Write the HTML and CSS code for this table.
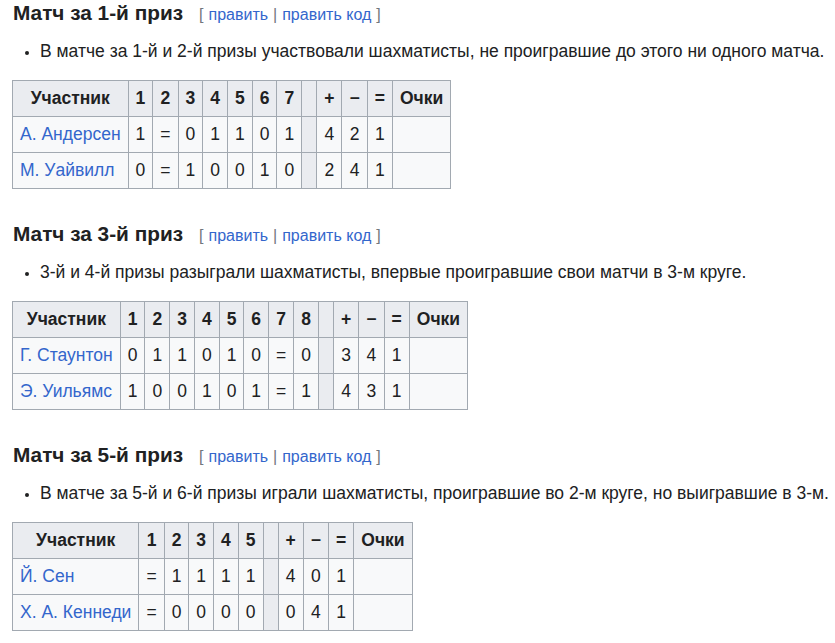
FILE: index.html
```html
<!DOCTYPE html>
<html lang="ru">
<head>
<meta charset="utf-8">
<link rel="stylesheet" href="styles.css">
</head>
<body>
<div class="content">
  <section class="sec">
    <h3 class="heading"><span class="title">Матч за 1-й приз</span><span class="edit"><span class="br">[</span><a href="#">править</a><span class="sep">|</span><a href="#">править код</a><span class="br">]</span></span></h3>
    <ul class="list"><li>В матче за 1-й и 2-й призы участвовали шахматисты, не проигравшие до этого ни одного матча.</li></ul>
    <table class="wikitable">
      <tr><th>Участник</th><th>1</th><th>2</th><th>3</th><th>4</th><th>5</th><th>6</th><th>7</th><th class="gap"></th><th>+</th><th>−</th><th>=</th><th>Очки</th></tr>
      <tr><td class="name"><a href="#">А. Андерсен</a></td><td>1</td><td>=</td><td>0</td><td>1</td><td>1</td><td>0</td><td>1</td><td class="gap"></td><td>4</td><td>2</td><td>1</td><td></td></tr>
      <tr><td class="name"><a href="#">М. Уайвилл</a></td><td>0</td><td>=</td><td>1</td><td>0</td><td>0</td><td>1</td><td>0</td><td class="gap"></td><td>2</td><td>4</td><td>1</td><td></td></tr>
    </table>
  </section>
  <section class="sec">
    <h3 class="heading"><span class="title">Матч за 3-й приз</span><span class="edit"><span class="br">[</span><a href="#">править</a><span class="sep">|</span><a href="#">править код</a><span class="br">]</span></span></h3>
    <ul class="list"><li>3-й и 4-й призы разыграли шахматисты, впервые проигравшие свои матчи в 3-м круге.</li></ul>
    <table class="wikitable">
      <tr><th>Участник</th><th>1</th><th>2</th><th>3</th><th>4</th><th>5</th><th>6</th><th>7</th><th>8</th><th class="gap"></th><th>+</th><th>−</th><th>=</th><th>Очки</th></tr>
      <tr><td class="name"><a href="#">Г. Стаунтон</a></td><td>0</td><td>1</td><td>1</td><td>0</td><td>1</td><td>0</td><td>=</td><td>0</td><td class="gap"></td><td>3</td><td>4</td><td>1</td><td></td></tr>
      <tr><td class="name"><a href="#">Э. Уильямс</a></td><td>1</td><td>0</td><td>0</td><td>1</td><td>0</td><td>1</td><td>=</td><td>1</td><td class="gap"></td><td>4</td><td>3</td><td>1</td><td></td></tr>
    </table>
  </section>
  <section class="sec">
    <h3 class="heading"><span class="title">Матч за 5-й приз</span><span class="edit"><span class="br">[</span><a href="#">править</a><span class="sep">|</span><a href="#">править код</a><span class="br">]</span></span></h3>
    <ul class="list"><li>В матче за 5-й и 6-й призы играли шахматисты, проигравшие во 2-м круге, но выигравшие в 3-м.</li></ul>
    <table class="wikitable">
      <tr><th>Участник</th><th>1</th><th>2</th><th>3</th><th>4</th><th>5</th><th class="gap"></th><th>+</th><th>−</th><th>=</th><th>Очки</th></tr>
      <tr><td class="name"><a href="#">Й. Сен</a></td><td>=</td><td>1</td><td>1</td><td>1</td><td>1</td><td class="gap"></td><td>4</td><td>0</td><td>1</td><td></td></tr>
      <tr><td class="name"><a href="#">Х. А. Кеннеди</a></td><td>=</td><td>0</td><td>0</td><td>0</td><td>0</td><td class="gap"></td><td>0</td><td>4</td><td>1</td><td></td></tr>
    </table>
  </section>
</div>
</body>
</html>
```
FILE: styles.css
```css
html, body {
  margin: 0;
  padding: 0;
  background: #ffffff;
}
body {
  font-family: "Liberation Sans", Arial, sans-serif;
  color: #202122;
  font-size: 17.5px;
}
.content {
  padding: 0 0 0 12px;
}
.sec {
  padding-bottom: 32px;
}
.heading {
  margin: 0;
  font-size: 20.8px;
  line-height: 26px;
  font-weight: bold;
  display: flex;
  align-items: baseline;
}
.title {
  padding-left: 1px;
}
.edit {
  font-weight: normal;
  font-size: 16px;
  margin-left: 16px;
  display: inline-flex;
  gap: 5px;
  align-items: baseline;
}
.edit .br, .edit .sep {
  color: #72777d;
}
a {
  color: #3366cc;
  text-decoration: none;
}
.list {
  margin: 12px 0 0 0;
  padding: 0 0 0 28px;
  line-height: 22px;
  list-style: disc;
}
.list li::marker {
  font-size: 13px;
}
.wikitable {
  margin-top: 18px;
  border-collapse: collapse;
  background: #f8f9fa;
  border: 1px solid #a2a9b1;
  color: #202122;
}
.wikitable th, .wikitable td {
  border: 1px solid #a2a9b1;
  padding: 5px 7px;
  line-height: 25px;
  text-align: center;
  font-size: 17.5px;
}
.wikitable th {
  background: #eaecf0;
  font-weight: bold;
}
.wikitable td.name {
  text-align: left;
}
.wikitable .gap {
  background: #eaecf0;
}
```
